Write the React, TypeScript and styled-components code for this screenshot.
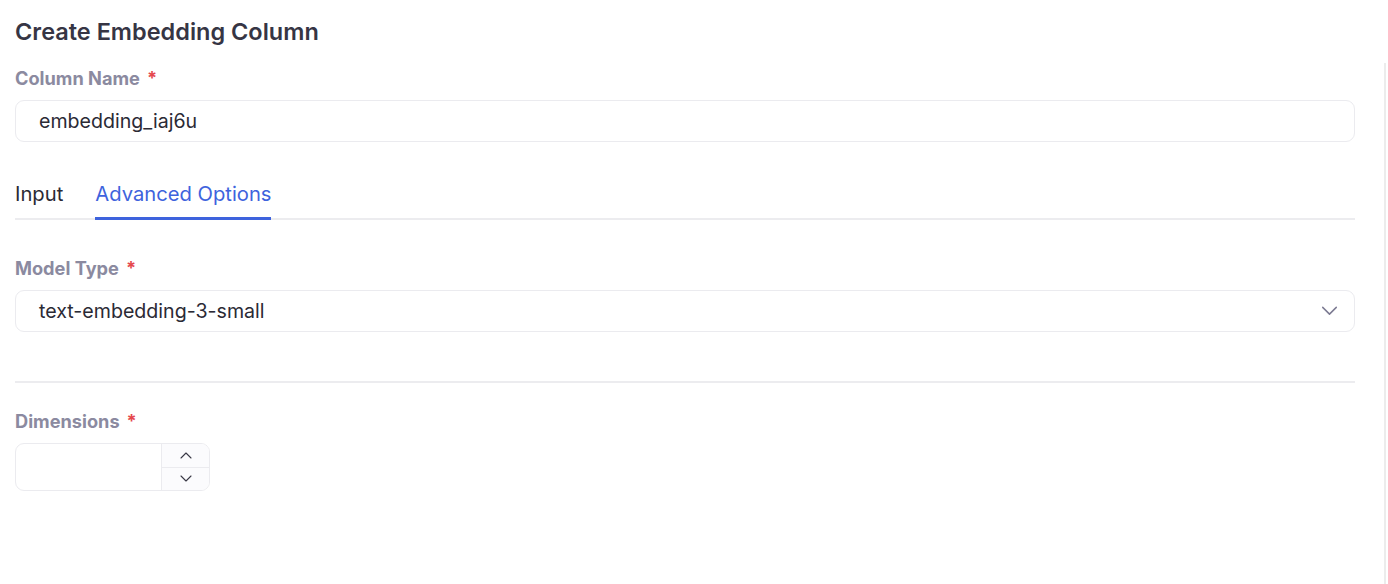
import React from "react";
import styled, { createGlobalStyle } from "styled-components";

const Global = createGlobalStyle`
  html, body { margin: 0; padding: 0; background: #fff; }
  body { font-family: Inter, "Noto Sans", sans-serif; -webkit-font-smoothing: antialiased; }
  * { box-sizing: border-box; }
`;

const Page = styled.div`
  display: flex;
  width: 1388px;
  height: 584px;
  overflow: hidden;
`;

const Main = styled.div`
  flex: 1;
  padding: 16px 29px 0 15px;
  display: flex;
  flex-direction: column;
`;

const EdgeStrip = styled.div`
  width: 2px;
  margin-top: 63px;
  margin-right: 2px;
  background: #ececec;
`;

const Title = styled.h1`
  margin: 0;
  font-size: 23.5px;
  line-height: 32px;
  font-weight: 600;
  color: #363544;
`;

const Label = styled.div<{ $mt: number }>`
  margin-top: ${(p) => p.$mt}px;
  font-size: 18.2px;
  line-height: 24px;
  font-weight: 700;
  color: #8b8aa0;
  display: flex;
  gap: 7px;
`;

const Star = styled.span`
  color: #e5484d;
`;

const Field = styled.div`
  margin-top: 10px;
  height: 42px;
  border: 1px solid #ebebef;
  border-radius: 9px;
  display: flex;
  align-items: center;
  padding: 0 16px 0 23px;
  font-size: 19.6px;
  color: #2b2a35;
  background: #fff;
`;

const FieldText = styled.span`
  flex: 1;
`;

const Tabs = styled.div`
  margin-top: 40px;
  display: flex;
  gap: 32px;
  border-bottom: 2px solid #ececef;
`;

const Tab = styled.div<{ $active?: boolean }>`
  font-size: 20.2px;
  line-height: 24px;
  padding-bottom: 11px;
  margin-bottom: -2px;
  color: ${(p) => (p.$active ? "#3e63dd" : "#2b2a35")};
  border-bottom: 3px solid ${(p) => (p.$active ? "#3e63dd" : "transparent")};
`;

const Divider = styled.div`
  margin-top: 49px;
  height: 2px;
  background: #ececef;
`;

const NumberBox = styled.div`
  margin-top: 10px;
  width: 195px;
  height: 48px;
  border: 1px solid #ebebef;
  border-radius: 9px;
  display: flex;
  overflow: hidden;
`;

const NumberInput = styled.div`
  flex: 1;
`;

const Stepper = styled.div`
  width: 48px;
  border-left: 1px solid #ebebef;
  background: #fbfbfd;
  display: flex;
  flex-direction: column;
`;

const StepButton = styled.div<{ $top?: boolean }>`
  flex: 1;
  display: flex;
  align-items: center;
  justify-content: center;
  ${(p) => (p.$top ? "border-bottom: 1px solid #ebebef;" : "")}
`;

const Chevron = ({ up, size = 12, color = "#3a3946" }: { up?: boolean; size?: number; color?: string }) => (
  <svg width={size} height={size / 2 + 1} viewBox="0 0 12 7" fill="none">
    <path
      d={up ? "M1 6 L6 1 L11 6" : "M1 1 L6 6 L11 1"}
      stroke={color}
      strokeWidth="1.1"
      strokeLinecap="round"
      strokeLinejoin="round"
    />
  </svg>
);

export default function App() {
  return (
    <>
      <Global />
      <Page>
        <Main>
          <Title>Create Embedding Column</Title>
          <Label $mt={18}>
            Column Name <Star>*</Star>
          </Label>
          <Field>
            <FieldText>embedding_iaj6u</FieldText>
          </Field>
          <Tabs>
            <Tab>Input</Tab>
            <Tab $active>Advanced Options</Tab>
          </Tabs>
          <Label $mt={36}>
            Model Type <Star>*</Star>
          </Label>
          <Field>
            <FieldText>text-embedding-3-small</FieldText>
            <Chevron size={17} color="#7c7a92" />
          </Field>
          <Divider />
          <Label $mt={26}>
            Dimensions <Star>*</Star>
          </Label>
          <NumberBox>
            <NumberInput />
            <Stepper>
              <StepButton $top>
                <Chevron up size={12} />
              </StepButton>
              <StepButton>
                <Chevron size={12} />
              </StepButton>
            </Stepper>
          </NumberBox>
        </Main>
        <EdgeStrip />
      </Page>
    </>
  );
}
